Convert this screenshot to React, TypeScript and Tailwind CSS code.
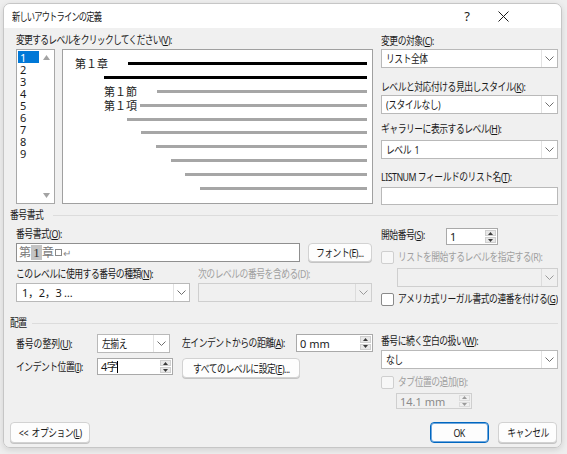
import React from "react";

const FONT = `[font-family:'Noto_Sans','Noto_Sans_CJK_JP',sans-serif]`;

function T({ children, center }: { children: React.ReactNode; center?: boolean }) {
  return (
    <span
      className={`inline-block whitespace-nowrap tracking-[-0.6px] ${center ? "origin-center" : "origin-left"} scale-x-[0.8]`}
    >
      {children}
    </span>
  );
}

function Chevron({ disabled }: { disabled?: boolean }) {
  return (
    <svg width="9" height="5" viewBox="0 0 9 5">
      <path d="M0.5 0.5 L4.5 4.5 L8.5 0.5" stroke={disabled ? "#9a9a9a" : "#6e6e6e"} strokeWidth="1" fill="none" />
    </svg>
  );
}

function Select({ value, w, disabled, h = "h-[19px]" }: { value?: React.ReactNode; w: string; disabled?: boolean; h?: string }) {
  return (
    <div
      className={`flex ${h} ${w} border ${disabled ? "border-[#cfcfcf] bg-[#f0f0f0]" : "border-[#b9b9b9] bg-white"}`}
    >
      <div className="flex min-w-0 flex-1 items-center overflow-hidden whitespace-nowrap pl-[4px] text-[11px] leading-none text-[#1a1a1a]">
        {value}
      </div>
      <div className={`flex w-[16px] items-center justify-center border-l ${disabled ? "border-[#dcdcdc]" : "border-[#e2e2e2]"}`}>
        <Chevron disabled={disabled} />
      </div>
    </div>
  );
}

function Tri({ up, disabled }: { up?: boolean; disabled?: boolean }) {
  return (
    <svg width="5" height="3" viewBox="0 0 5 3">
      <path d={up ? "M0 3 L2.5 0 L5 3 Z" : "M0 0 L2.5 3 L5 0 Z"} fill={disabled ? "#9a9a9a" : "#3a3a3a"} />
    </svg>
  );
}

function Spin({ value, w, h = "h-[17px]", disabled, cursor }: { value: React.ReactNode; w: string; h?: string; disabled?: boolean; cursor?: boolean }) {
  return (
    <div className={`flex ${h} ${w} border ${disabled ? "border-[#cfcfcf] bg-[#f0f0f0]" : "border-[#a9a9a9] bg-white"}`}>
      <div
        className={`flex flex-1 items-center whitespace-nowrap pl-[3px] text-[11px] leading-none ${disabled ? "text-[#8a8a8a]" : "text-[#1a1a1a]"}`}
      >
        {value}
        {cursor && <span className="inline-block h-[12px] w-px bg-black" />}
      </div>
      <div className="flex w-[13px] flex-col gap-px p-px">
        <div className={`flex flex-1 items-center justify-center border ${disabled ? "border-[#dcdcdc] bg-[#f0f0f0]" : "border-[#cfcfcf] bg-[#e8e8e8]"}`}>
          <Tri up disabled={disabled} />
        </div>
        <div className={`flex flex-1 items-center justify-center border ${disabled ? "border-[#dcdcdc] bg-[#f0f0f0]" : "border-[#cfcfcf] bg-[#e8e8e8]"}`}>
          <Tri disabled={disabled} />
        </div>
      </div>
    </div>
  );
}

function Check({ disabled }: { disabled?: boolean }) {
  return (
    <div
      className={`h-[13px] w-[13px] shrink-0 rounded-[2px] border ${disabled ? "border-[#cfcfcf] bg-[#f7f7f7]" : "border-[#8a8a8a] bg-white"}`}
    />
  );
}

function Btn({ children, w, primary, h = "h-[21px]" }: { children: React.ReactNode; w: string; primary?: boolean; h?: string }) {
  return (
    <div
      className={`flex ${h} ${w} items-center justify-center whitespace-nowrap rounded-[4px] border text-[11px] leading-none text-[#1a1a1a] ${
        primary
          ? "border-[#0067c0] bg-[#fdfdfd] shadow-[inset_0_0_0_1px_#6ea6dc]"
          : "border-[#d2d2d2] bg-[#fdfdfd] shadow-[0_1px_0_#c4c4c4]"
      }`}
    >
      <T center>{children}</T>
    </div>
  );
}

function Label({ children, disabled, className = "" }: { children: React.ReactNode; disabled?: boolean; className?: string }) {
  return (
    <div
      className={`h-[16px] whitespace-nowrap text-[11px] leading-[16px] ${disabled ? "text-[#a0a0a0]" : "text-[#1a1a1a]"} ${className}`}
    >
      <T>{children}</T>
    </div>
  );
}

function GroupHeader({ title, tw }: { title: string; tw: string }) {
  return (
    <div className="flex h-[16px] items-center">
      <div className={`${tw} text-[11px] leading-[16px] text-[#1a1a1a]`}>
        <T>{title}</T>
      </div>
      <div className="h-px flex-1 bg-[#dcdcdc]" />
    </div>
  );
}

const previewRows: { pl: string; text?: string; tw?: string; black?: boolean }[] = [
  { pl: "pl-[12px]", text: "第１章", tw: "w-[53px]", black: true },
  { pl: "pl-[41px]", black: true },
  { pl: "pl-[41px]", text: "第１節", tw: "w-[53px]" },
  { pl: "pl-[41px]", text: "第１項", tw: "w-[36px]" },
  { pl: "pl-[64px]" },
  { pl: "pl-[78px]" },
  { pl: "pl-[93px]" },
  { pl: "pl-[108px]" },
  { pl: "pl-[122px]" },
  { pl: "pl-[137px]" },
];

export default function App() {
  return (
    <div className={`h-[454px] w-[567px] bg-[#eeeeee] p-[3px] ${FONT}`}>
      <div className="flex h-[445px] w-[559px] flex-col overflow-hidden rounded-[7px] border border-[#c6c6c6] shadow-[0_2px_6px_rgba(0,0,0,0.12)]">
        {/* Title bar */}
        <div className="flex h-[24px] items-center bg-white pl-[8px]">
          <span className="inline-block origin-left scale-x-[0.75] whitespace-nowrap text-[11px] leading-none tracking-[-1.1px] text-[#1a1a1a]">
            新しいアウトラインの定義
          </span>
          <div className="flex-1" />
          <span className="mr-[28px] text-[13px] leading-none text-[#1a1a1a]">?</span>
          <svg width="11" height="11" viewBox="0 0 11 11" className="mr-[52px]">
            <path d="M0.5 0.5 L10.5 10.5 M10.5 0.5 L0.5 10.5" stroke="#1a1a1a" strokeWidth="1" />
          </svg>
        </div>

        {/* Body */}
        <div className="flex flex-1 flex-col bg-[#f0f0f0] pl-[6px] pr-[3px] pt-[4px]">
          {/* Top section */}
          <div className="flex pl-[6px]">
            <div className="flex w-[357px] flex-col">
              <Label>
                <span className="tracking-[-0.9px]">変更するレベルをクリックしてください</span>(<u>V</u>):
              </Label>
              <div className="mt-[1px] flex">
                {/* Level list */}
                <div className="flex h-[155px] w-[39px] border border-[#a8a8a8] bg-white">
                  <div className="flex flex-1 flex-col pl-[1px] pt-[1px]">
                    {["1", "2", "3", "4", "5", "6", "7", "8", "9"].map((n, i) => (
                      <div
                        key={n}
                        className={`flex h-[12px] items-center pl-[2px] text-[11px] leading-none ${
                          i === 0 ? "bg-[#0078d7] text-white" : "text-[#1a1a1a]"
                        }`}
                      >
                        {n}
                      </div>
                    ))}
                  </div>
                  <div className="flex w-[15px] flex-col items-center justify-between py-[5px]">
                    <svg width="7" height="5" viewBox="0 0 7 5">
                      <path d="M0 5 L3.5 0 L7 5 Z" fill="#a3a3a3" />
                    </svg>
                    <svg width="7" height="5" viewBox="0 0 7 5">
                      <path d="M0 0 L3.5 5 L7 0 Z" fill="#a3a3a3" />
                    </svg>
                  </div>
                </div>
                {/* Preview */}
                <div className="ml-[7px] flex h-[155px] w-[311px] flex-col border border-[#a0a0a0] bg-white pr-[5px] pt-[7px]">
                  {previewRows.map((r, i) => (
                    <div key={i} className={`flex h-[13.8px] items-center ${r.pl}`}>
                      {r.text && (
                        <span className={`${r.tw} whitespace-nowrap text-[11px] leading-none text-[#1a1a1a]`}>{r.text}</span>
                      )}
                      <div className={`h-[3px] flex-1 ${r.black ? "bg-black" : "bg-[#a6a6a6]"}`} />
                    </div>
                  ))}
                </div>
              </div>
            </div>

            <div className="ml-[8px] flex w-[177px] flex-col">
              <Label className="mt-[1px]">
                変更の対象(<u>C</u>):
              </Label>
              <Select w="w-[177px]" value={<T>リスト全体</T>} />
              <Label className="mt-[11px]">
                レベルと対応付ける見出しスタイル(<u>K</u>):
              </Label>
              <Select w="w-[177px]" value={<T>(スタイルなし)</T>} />
              <Label className="mt-[7px]">
                ギャラリーに表示するレベル(<u>H</u>):
              </Label>
              <Select w="w-[177px]" value={<T>レベル&nbsp;&nbsp;1</T>} h="h-[19px] mt-[3px]" />
              <Label className="mt-[10px]">
                LISTNUM フィールドのリスト名(<u>T</u>):
              </Label>
              <div className="mt-[2px] h-[18px] w-[177px] border border-[#b9b9b9] bg-white" />
            </div>
          </div>

          {/* 番号書式 */}
          <div className="mt-[2px]">
            <GroupHeader title="番号書式" tw="w-[43px]" />
          </div>
          <div className="flex pl-[6px]">
            <div className="flex w-[356px] flex-col">
              <Label className="mt-[3px]">
                番号書式(<u>O</u>):
              </Label>
              <div className="mt-[1px] flex">
                <div className="flex h-[19px] w-[284px] items-center border border-[#8f8f8f] bg-white pl-[2px]">
                  <span className="text-[12px] leading-none text-[#7a7a7a]">第</span>
                  <span className="flex h-[15px] w-[11px] items-center justify-center bg-[#c4c4c4] [font-family:'Liberation_Serif',serif] text-[13px] leading-none text-[#333]">
                    1
                  </span>
                  <span className="text-[12px] leading-none text-[#7a7a7a]">章</span>
                  <span className="ml-[1px] inline-block h-[7px] w-[7px] border border-[#8a8a8a]" />
                  <span className="ml-[1px] text-[10px] leading-none text-[#8a8a8a]">↵</span>
                </div>
                <Btn w="ml-[8px] w-[64px]" h="h-[19px]">
                  フォント(E)...
                </Btn>
              </div>
              <div className="mt-[4px] flex">
                <Label className="w-[182px]">
                  このレベルに使用する番号の種類(<u>N</u>):
                </Label>
                <Label disabled>次のレベルの番号を含める(D):</Label>
              </div>
              <div className="mt-[1px] flex">
                <Select w="w-[174px]" value={<span className="pl-[1px] text-[11px] tracking-[-0.3px]">1，2，3 …</span>} />
                <Select w="ml-[8px] w-[174px]" disabled />
              </div>
            </div>

            <div className="ml-[9px] flex w-[177px] flex-col">
              <div className="mt-[5px] flex h-[17px] items-center">
                <Label className="w-[65px] -mt-[3px]">
                  開始番号(<u>S</u>):
                </Label>
                <Spin w="w-[52px]" value="1" />
              </div>
              <div className="mt-[4px] flex h-[16px] items-center">
                <Check disabled />
                <Label disabled className="ml-[4px]">
                  リストを開始するレベルを指定する(R):
                </Label>
              </div>
              <Select w="ml-[16px] mt-[3px] w-[161px]" disabled />
              <div className="mt-[4px] flex h-[16px] items-center">
                <Check />
                <Label className="ml-[4px]">
                  アメリカ式リーガル書式の連番を付ける(<u>G</u>)
                </Label>
              </div>
            </div>
          </div>

          {/* 配置 */}
          <div className="mt-[8px]">
            <GroupHeader title="配置" tw="w-[22px]" />
          </div>
          <div className="flex pl-[6px]">
            <div className="flex w-[157px] flex-col">
              <div className="mt-[3px] flex items-center">
                <Label className="w-[81px]">
                  <span className="tracking-[0px]">番号の整列</span>(<u>U</u>):
                </Label>
                <Select w="w-[73px]" value={<T>左揃え</T>} />
              </div>
              <div className="mt-[5px] flex items-center">
                <Label className="w-[81px]">
                  インデント位置(<u>I</u>):
                </Label>
                <Spin w="w-[76px]" value={<span className="tracking-[-0.5px]">4字</span>} cursor />
              </div>
            </div>
            <div className="ml-[9px] flex w-[191px] flex-col">
              <div className="mt-[3px] flex items-center">
                <Label className="w-[114px]">
                  左インデントからの距離(<u>A</u>):
                </Label>
                <Spin w="w-[77px]" h="h-[18px]" value="0 mm" />
              </div>
              <Btn w="mt-[6px] w-[118px]" h="h-[20px]">
                すべてのレベルに設定(<u>E</u>)...
              </Btn>
            </div>
            <div className="ml-[8px] flex w-[177px] flex-col">
              <Label className="mt-[2px]">
                番号に続く空白の扱い(<u>W</u>):
              </Label>
              <Select w="mt-[1px] w-[177px]" value={<T>なし</T>} />
              <div className="mt-[5px] flex h-[16px] items-center">
                <Check disabled />
                <Label disabled className="ml-[4px]">
                  タブ位置の追加(B):
                </Label>
              </div>
              <Spin w="ml-[15px] mt-[3px] w-[76px]" h="h-[16px]" value="14.1 mm" disabled />
            </div>
          </div>

          {/* Buttons */}
          <div className="mt-[13px] mr-[1px] flex">
            <Btn w="w-[80px]">
              &lt;&lt;&nbsp;&nbsp;オプション(<u>L</u>)
            </Btn>
            <div className="flex-1" />
            <Btn w="w-[59px]" primary>
              OK
            </Btn>
            <Btn w="ml-[9px] w-[59px]">キャンセル</Btn>
          </div>
        </div>
      </div>
    </div>
  );
}
